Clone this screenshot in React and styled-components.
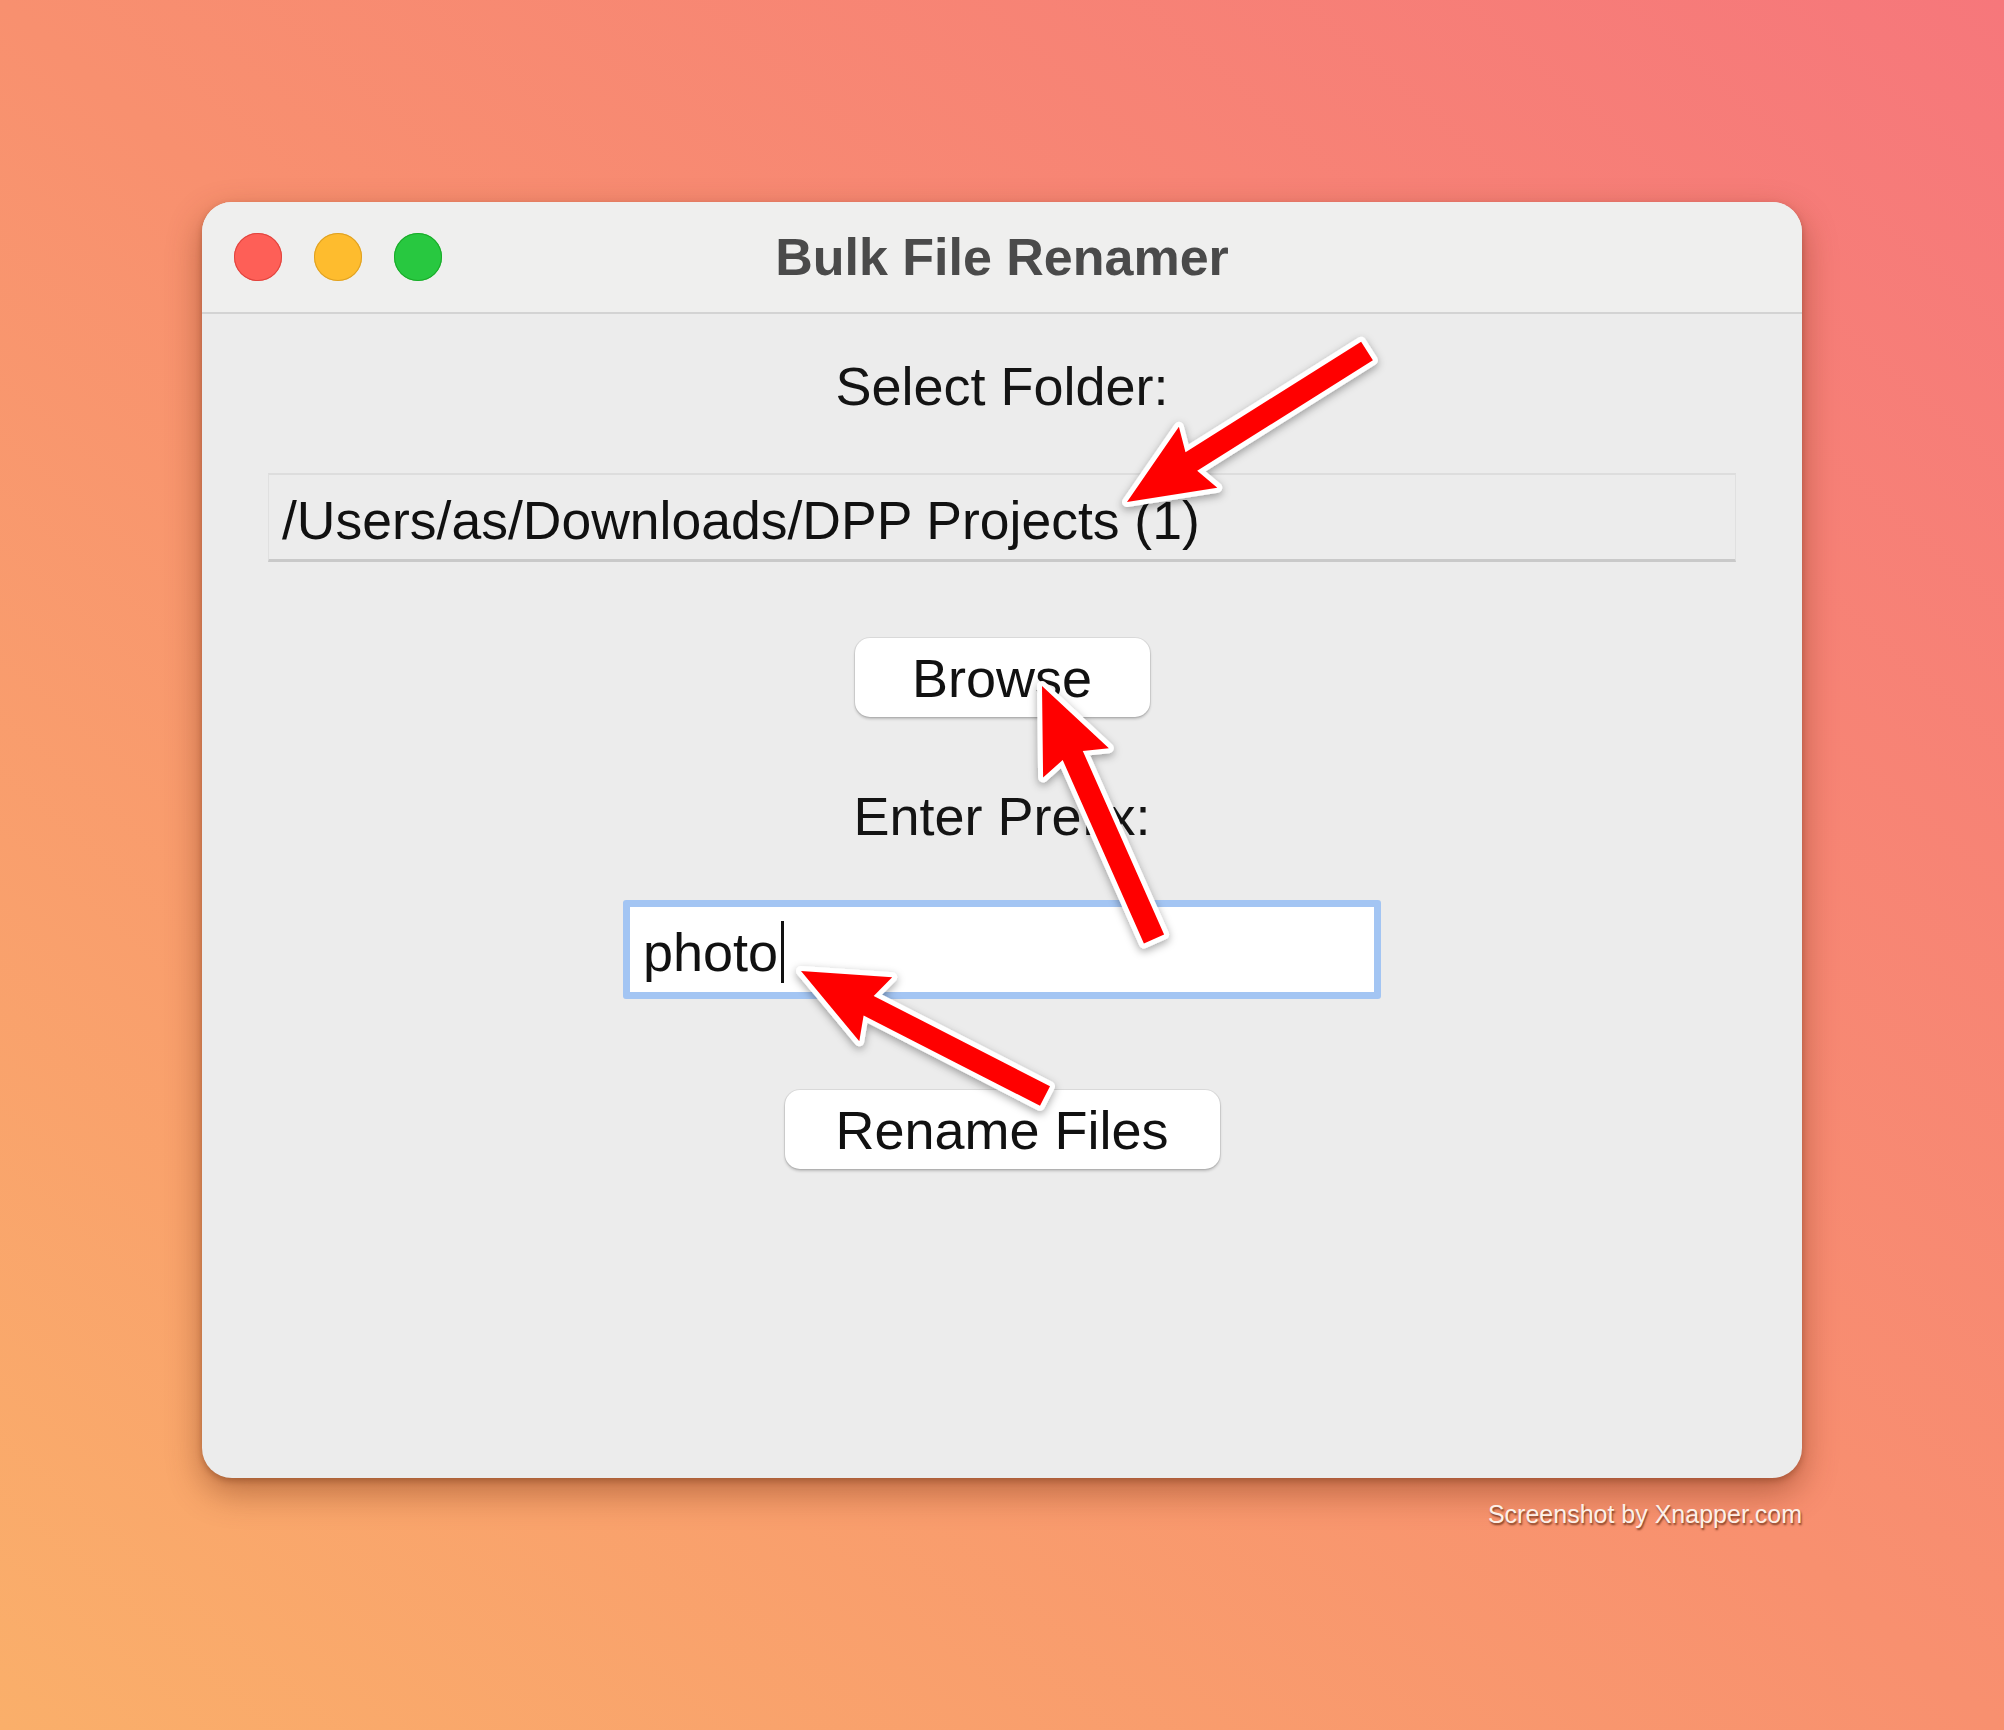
import React from "react";
import styled, { createGlobalStyle } from "styled-components";

const GlobalStyle = createGlobalStyle`
  html, body {
    margin: 0;
    padding: 0;
    width: 2004px;
    height: 1730px;
    overflow: hidden;
  }
  body {
    font-family: "Liberation Sans", Arial, Helvetica, sans-serif;
  }
`;

const Desktop = styled.div`
  position: relative;
  box-sizing: border-box;
  width: 2004px;
  height: 1730px;
  padding: 202px 0 0 202px;
  background: linear-gradient(to top right, #faaf6a 0%, #f8906f 50%, #f6777b 100%);
`;

const Column = styled.div`
  display: flex;
  flex-direction: column;
  width: 1600px;
`;

const Window = styled.div`
  display: flex;
  flex-direction: column;
  width: 1600px;
  height: 1276px;
  border-radius: 30px;
  overflow: hidden;
  background: #ececec;
  box-shadow: 0 14px 34px rgba(110, 45, 15, 0.45), 0 3px 6px rgba(110, 45, 15, 0.35);
`;

const TitleBar = styled.div`
  display: grid;
  grid-template-columns: 1fr auto 1fr;
  align-items: center;
  box-sizing: border-box;
  height: 112px;
  padding: 0 32px;
  background: #efefee;
  border-bottom: 2px solid #d3d3d3;
`;

const Lights = styled.div`
  display: flex;
  gap: 32px;
`;

const Light = styled.span`
  width: 48px;
  height: 48px;
  border-radius: 50%;
  background: ${(p) => p.$color};
  box-shadow: inset 0 0 0 1px ${(p) => p.$edge};
`;

const Title = styled.div`
  font-size: 52px;
  font-weight: 700;
  line-height: 60px;
  color: #4a4a4a;
`;

const Content = styled.div`
  display: flex;
  flex-direction: column;
  align-items: center;
  padding-top: 41px;
`;

const Label = styled.div`
  margin-top: ${(p) => p.$gap || 0}px;
  font-size: 54px;
  line-height: 62px;
  color: #141414;
`;

const PathField = styled.div`
  align-self: stretch;
  box-sizing: border-box;
  height: 89px;
  margin: 56px 66px 0;
  padding: 15px 13px 0;
  background: #ececec;
  border-top: 2px solid #dddddd;
  border-left: 1px solid #e0e0e0;
  border-right: 1px solid #e0e0e0;
  border-bottom: 3px solid #c9c9c9;
  font-size: 53.5px;
  line-height: 62px;
  color: #111;
  white-space: nowrap;
`;

const Button = styled.button`
  box-sizing: border-box;
  width: ${(p) => p.$width}px;
  height: 79px;
  margin-top: ${(p) => p.$gap}px;
  padding: 0;
  border: none;
  border-radius: 15px;
  background: #ffffff;
  box-shadow: 0 0 0 1px rgba(0, 0, 0, 0.07), 0 2px 3px rgba(0, 0, 0, 0.22);
  font-family: "Liberation Sans", Arial, Helvetica, sans-serif;
  font-size: 54px;
  line-height: 62px;
  color: #111;
`;

const PrefixInput = styled.div`
  display: flex;
  align-items: flex-start;
  box-sizing: border-box;
  width: 758px;
  height: 99px;
  margin-top: 53px;
  padding: 14px 13px 0;
  background: #ffffff;
  border: 7px solid #a3c5f3;
  border-radius: 3px;
  font-size: 54px;
  line-height: 62px;
  color: #111;
`;

const Caret = styled.span`
  display: inline-block;
  width: 3px;
  height: 62px;
  margin-left: 3px;
  background: #111;
`;

const Watermark = styled.div`
  align-self: flex-end;
  margin-top: 22px;
  font-size: 25px;
  line-height: 29px;
  color: #fcf0e8;
  text-shadow: 1px 2px 2px rgba(90, 35, 10, 0.75);
`;

const Overlay = styled.svg`
  position: absolute;
  top: 0;
  left: 0;
  pointer-events: none;
`;

const arrows = [
  { from: [1367, 351], to: [1127, 502] },
  { from: [1154, 939], to: [1042, 686] },
  { from: [1045, 1096], to: [801, 971] },
];

function arrowPoints([x1, y1], [x2, y2]) {
  const len = Math.hypot(x2 - x1, y2 - y1);
  const dx = (x2 - x1) / len;
  const dy = (y2 - y1) / len;
  const nx = -dy;
  const ny = dx;
  const shaft = 11;
  const head = 36;
  const headLen = 76;
  const bx = x2 - dx * headLen;
  const by = y2 - dy * headLen;
  const sweep = 8;
  const pts = [
    [x1 + nx * shaft, y1 + ny * shaft],
    [bx + nx * shaft, by + ny * shaft],
    [bx - dx * sweep + nx * head, by - dy * sweep + ny * head],
    [x2, y2],
    [bx - dx * sweep - nx * head, by - dy * sweep - ny * head],
    [bx - nx * shaft, by - ny * shaft],
    [x1 - nx * shaft, y1 - ny * shaft],
  ];
  return pts.map((p) => p.map((v) => v.toFixed(1)).join(",")).join(" ");
}

function Arrows() {
  return (
    <Overlay width="2004" height="1730" viewBox="0 0 2004 1730">
      <defs>
        <filter id="arrowShadow" x="-20%" y="-20%" width="140%" height="140%">
          <feDropShadow dx="0" dy="3" stdDeviation="4" floodColor="#000" floodOpacity="0.35" />
        </filter>
      </defs>
      {arrows.map((a, i) => (
        <polygon
          key={i}
          points={arrowPoints(a.from, a.to)}
          fill="#ff0000"
          stroke="#ffffff"
          strokeWidth="10"
          strokeLinejoin="round"
          paintOrder="stroke"
          filter="url(#arrowShadow)"
        />
      ))}
    </Overlay>
  );
}

export default function App() {
  return (
    <>
      <GlobalStyle />
      <Desktop>
        <Column>
          <Window>
            <TitleBar>
              <Lights>
                <Light $color="#fe5f57" $edge="#e0443e" />
                <Light $color="#febc2e" $edge="#dea123" />
                <Light $color="#28c840" $edge="#1aab29" />
              </Lights>
              <Title>Bulk File Renamer</Title>
              <div />
            </TitleBar>
            <Content>
              <Label>Select Folder:</Label>
              <PathField>/Users/as/Downloads/DPP Projects (1)</PathField>
              <Button $width={295} $gap={76}>Browse</Button>
              <Label $gap={68}>Enter Prefix:</Label>
              <PrefixInput>
                <span>photo</span>
                <Caret />
              </PrefixInput>
              <Button $width={435} $gap={91}>Rename Files</Button>
            </Content>
          </Window>
          <Watermark>Screenshot by Xnapper.com</Watermark>
        </Column>
        <Arrows />
      </Desktop>
    </>
  );
}
